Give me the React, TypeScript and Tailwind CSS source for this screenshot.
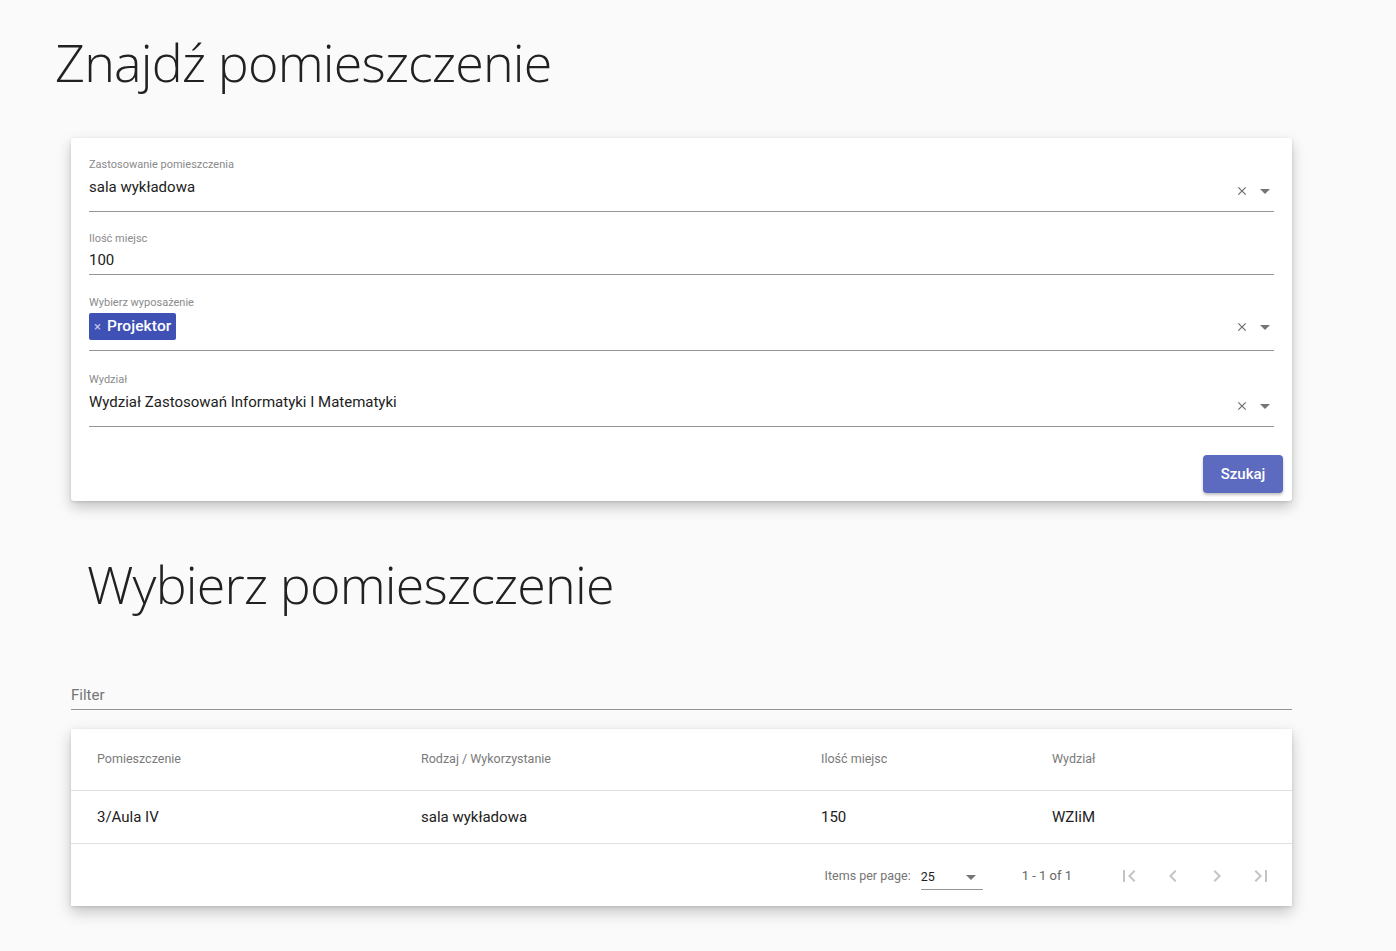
import React from 'react'

const body = { fontFamily: 'Roboto, "Noto Sans", sans-serif' }
const head = { fontFamily: '"Open Sans", "Noto Sans", sans-serif' }

function ClearIcon() {
  return (
    <svg width="14" height="14" viewBox="0 0 24 24" className="text-[#6b6b6b]">
      <path fill="currentColor" d="M19 6.41 17.59 5 12 10.59 6.41 5 5 6.41 10.59 12 5 17.59 6.41 19 12 13.41 17.59 19 19 17.59 13.41 12z" />
    </svg>
  )
}

function Arrow() {
  return <div className="w-0 h-0 border-l-[5px] border-r-[5px] border-t-[5px] border-l-transparent border-r-transparent border-t-[#757575]" />
}

function SelectTools() {
  return (
    <div className="h-[20px] flex items-center gap-[11px] pt-[8px] pr-[4px]">
      <ClearIcon />
      <Arrow />
    </div>
  )
}

function PageIcon({ d }: { d: string }) {
  return (
    <div className="w-10 h-10 flex items-center justify-center">
      <svg width="24" height="24" viewBox="0 0 24 24">
        <path fill="#c4c4c4" d={d} />
      </svg>
    </div>
  )
}

export default function App() {
  const label = 'text-[11px] leading-[13px] text-[#8a8a8a]'
  const value = 'text-[15px] leading-[20px] text-[#212121]'
  const cols = 'grid grid-cols-[324px_400px_231px_1fr] items-center pl-[26px]'
  return (
    <div className="min-h-[951px] bg-[#fafafa] overflow-hidden" style={body}>
      <h1 className="ml-[55px] pt-[29px] text-[52px] leading-[66px] font-light text-[#212121] tracking-[-0.8px]" style={head}>
        Znajdź pomieszczenie
      </h1>

      <div className="ml-[71px] w-[1221px] mt-[43px] bg-white rounded-[3px] shadow-[0_6px_14px_rgba(0,0,0,0.22),0_1px_3px_rgba(0,0,0,0.12)] pl-[18px] pr-[18px] pt-[20px]">
        {/* Zastosowanie */}
        <div>
          <div className={label}>Zastosowanie pomieszczenia</div>
          <div className="mt-[6px] pb-[14px] border-b border-[#949494] flex justify-between items-start">
            <div className={value}>sala wykładowa</div>
            <SelectTools />
          </div>
        </div>

        {/* Ilość miejsc */}
        <div className="mt-[20px]">
          <div className={label}>Ilość miejsc</div>
          <div className="mt-[5px] pb-[4px] border-b border-[#949494]">
            <div className={value}>100</div>
          </div>
        </div>

        {/* Wyposażenie */}
        <div className="mt-[21px]">
          <div className={label}>Wybierz wyposażenie</div>
          <div className="mt-[4px] pb-[10px] border-b border-[#949494] flex justify-between items-start">
            <div className="h-[27px] px-[5px] bg-[#3f51b5] rounded-[2px] flex items-center text-white">
              <span className="text-[13px] leading-none text-[#c5cae9] mr-[6px]">×</span>
              <span className="text-[15.5px] leading-none font-medium tracking-[0.1px]">Projektor</span>
            </div>
            <SelectTools />
          </div>
        </div>

        {/* Wydział */}
        <div className="mt-[22px]">
          <div className={label}>Wydział</div>
          <div className="mt-[6px] pb-[14px] border-b border-[#949494] flex justify-between items-start">
            <div className={value}>Wydział Zastosowań Informatyki I Matematyki</div>
            <SelectTools />
          </div>
        </div>

        <div className="flex justify-end mt-[28px] pb-[8px] -mr-[9px]">
          <button className="h-[38px] w-[80px] rounded-[4px] bg-[#5c6bc0] text-white text-[15px] font-medium shadow-[0_2px_3px_rgba(0,0,0,0.25)]">
            Szukaj
          </button>
        </div>
      </div>

      <h2 className="ml-[87px] mt-[50px] text-[52px] leading-[66px] font-light text-[#212121] tracking-[-0.8px]" style={head}>
        Wybierz pomieszczenie
      </h2>

      <div className="ml-[71px] w-[1221px] mt-[68px]">
        <div className="pb-[4px] border-b border-[#949494] text-[15px] leading-[20px] text-[#757575]">Filter</div>
      </div>

      <div className="ml-[71px] w-[1221px] mt-[19px] bg-white shadow-[0_6px_14px_rgba(0,0,0,0.22),0_1px_3px_rgba(0,0,0,0.12)]">
        <div className={`${cols} h-[62px] border-b border-[#e0e0e0] text-[12.5px] text-[#7a7a7a]`}>
          <div>Pomieszczenie</div>
          <div>Rodzaj / Wykorzystanie</div>
          <div>Ilość miejsc</div>
          <div>Wydział</div>
        </div>
        <div className={`${cols} h-[53px] border-b border-[#e0e0e0] text-[15px] text-[#212121]`}>
          <div>3/Aula IV</div>
          <div>sala wykładowa</div>
          <div>150</div>
          <div>WZIiM</div>
        </div>
        <div className="h-[62px] pt-[2px] flex items-center justify-end pr-[11px] text-[12.5px] text-[#757575]">
          <span className="mr-[10px]">Items per page:</span>
          <div className="w-[62px] h-[24px] mt-[4px] border-b border-[#949494] flex items-center justify-between pr-[7px]">
            <span className="text-[#212121]">25</span>
            <Arrow />
          </div>
          <span className="ml-[39px] mr-[37px] text-[#666] text-[13px]">1 - 1 of 1</span>
          <div className="flex gap-[4px]">
            <PageIcon d="M18.41 16.59 13.82 12l4.59-4.59L17 6l-6 6 6 6zM6 6h2v12H6z" />
            <PageIcon d="M15.41 7.41 14 6l-6 6 6 6 1.41-1.41L10.83 12z" />
            <PageIcon d="M10 6 8.59 7.41 13.17 12l-4.58 4.59L10 18l6-6z" />
            <PageIcon d="M5.59 7.41 10.18 12l-4.59 4.59L7 18l6-6-6-6zM16 6h2v12h-2z" />
          </div>
        </div>
      </div>
    </div>
  )
}
